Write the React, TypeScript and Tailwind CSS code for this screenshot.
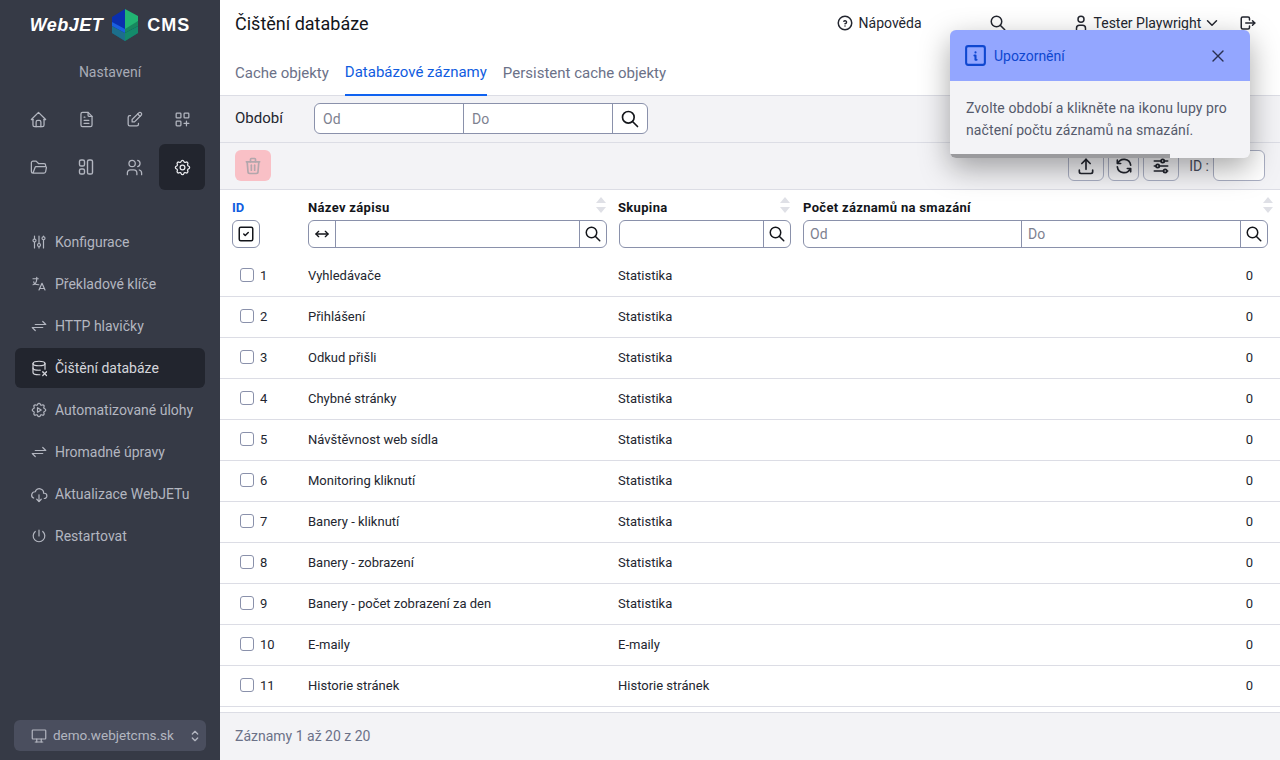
import type { ReactNode } from "react";
import {
    TbAdjustments,
    TbAdjustmentsHorizontal,
    TbArrowsExchange,
    TbArrowsHorizontal,
    TbChevronDown,
    TbCloudDownload,
    TbDatabaseX,
    TbDeviceDesktop,
    TbEdit,
    TbFileText,
    TbFolderOpen,
    TbHelpCircle,
    TbHome,
    TbInfoSquare,
    TbLanguage,
    TbLayoutGridAdd,
    TbLogout,
    TbPower,
    TbRefresh,
    TbSearch,
    TbSelector,
    TbSettings,
    TbSettingsAutomation,
    TbSquareCheck,
    TbTrash,
    TbUpload,
    TbUser,
    TbUsers,
    TbX,
} from "react-icons/tb";

const menuItems = [
    { label: "Konfigurace", icon: TbAdjustments },
    { label: "Překladové klíče", icon: TbLanguage },
    { label: "HTTP hlavičky", icon: TbArrowsExchange },
    { label: "Čištění databáze", icon: TbDatabaseX, active: true },
    { label: "Automatizované úlohy", icon: TbSettingsAutomation },
    { label: "Hromadné úpravy", icon: TbArrowsExchange },
    { label: "Aktualizace WebJETu", icon: TbCloudDownload },
    { label: "Restartovat", icon: TbPower },
];

const rows = [
    ["1", "Vyhledávače", "Statistika"],
    ["2", "Přihlášení", "Statistika"],
    ["3", "Odkud přišli", "Statistika"],
    ["4", "Chybné stránky", "Statistika"],
    ["5", "Návštěvnost web sídla", "Statistika"],
    ["6", "Monitoring kliknutí", "Statistika"],
    ["7", "Banery - kliknutí", "Statistika"],
    ["8", "Banery - zobrazení", "Statistika"],
    ["9", "Banery - počet zobrazení za den", "Statistika"],
    ["10", "E-maily", "E-maily"],
    ["11", "Historie stránek", "Historie stránek"],
];

function ColumnsIcon() {
    return (
        <svg viewBox="0 0 20 20" className="size-5" fill="none" stroke="currentColor" strokeWidth="1.4">
            <rect x="3.5" y="3" width="5" height="6" rx="1.6" />
            <rect x="3.5" y="12" width="5" height="5" rx="1.6" />
            <rect x="11.5" y="3" width="5" height="14" rx="1.6" />
        </svg>
    );
}

function LogoMark() {
    return (
        <svg viewBox="0 0 28 32" className="h-8 w-7">
            <polygon points="14,19 27,13 27,24 14,32 1,24 1,15" fill="#0f6b74" />
            <polygon points="14,22 1,15 1,24 14,32" fill="#1d6f8c" />
            <polygon points="14,22 27,15 27,24 14,32" fill="#148a6a" />
            <polygon points="14,10 27,8 27,17 14,24 1,17 1,9" fill="#0b3f5c" />
            <polygon points="1,8 14,14 14,24 1,17" fill="#1a5fe0" />
            <polygon points="14,14 27,12 27,17 14,24" fill="#17885f" />
            <polygon points="14,0 1,8 1,13 14,20" fill="#0a2fae" />
            <polygon points="14,0 27,7 27,12 14,20" fill="#22b573" />
        </svg>
    );
}

function SortArrows() {
    return (
        <span className="flex flex-col gap-1">
            <span className="h-0 w-0 border-x-[5px] border-b-[6px] border-x-transparent border-b-[#dfe0e6]" />
            <span className="h-0 w-0 border-x-[5px] border-t-[6px] border-x-transparent border-t-[#dfe0e6]" />
        </span>
    );
}

function ToolButton({ children, width }: { children: ReactNode; width: string }) {
    return (
        <button type="button" className={`flex h-[31px] items-center justify-center rounded-md border border-[#a9aec2] text-[#23262f] ${width}`}>
            {children}
        </button>
    );
}

function HeaderCell({ label, overhang }: { label: string; overhang?: boolean }) {
    return (
        <div className={overhang ? "-mr-[5px] flex h-[30px] items-start justify-between pt-[10px]" : "mr-px flex h-[30px] items-start justify-between pt-[10px]"}>
            <span className="text-[13px] leading-4 font-bold tracking-[0.33px] text-[#13151a]">{label}</span>
            <span className="-mt-[3px]">
                <SortArrows />
            </span>
        </div>
    );
}

function FilterSearch() {
    return (
        <span className="flex w-[27px] shrink-0 items-center justify-center border-l border-[#8a91ab] text-[#13151a]">
            <TbSearch className="size-[18px]" />
        </span>
    );
}

export default function App() {
    return (
        <div className="flex h-[760px] w-[1280px] overflow-hidden bg-white font-['Roboto',sans-serif] text-[13px] text-[#23262f]">
            <aside className="flex w-[220px] shrink-0 flex-col bg-[#363a46] text-[#b3b6c0]">
                <div className="flex h-12 items-center justify-center gap-2 pt-0.5">
                    <span className="font-['Liberation_Sans',sans-serif] text-[18px] leading-none font-bold tracking-[0.5px] text-white italic">WebJET</span>
                    <LogoMark />
                    <span className="font-['Liberation_Sans',sans-serif] text-[18px] leading-none font-bold tracking-[1px] text-white">CMS</span>
                </div>
                <div className="mt-3 text-center text-sm leading-6 text-[#a8abb6]">Nastavení</div>
                <div className="mt-3 grid grid-cols-[repeat(4,46px)] gap-0.5 pl-[15px]">
                    <span className="flex h-[46px] items-center justify-center"><TbHome className="size-[19px]" strokeWidth={1.6} /></span>
                    <span className="flex h-[46px] items-center justify-center"><TbFileText className="size-[19px]" strokeWidth={1.6} /></span>
                    <span className="flex h-[46px] items-center justify-center"><TbEdit className="size-[19px]" strokeWidth={1.6} /></span>
                    <span className="flex h-[46px] items-center justify-center"><TbLayoutGridAdd className="size-[19px]" strokeWidth={1.6} /></span>
                    <span className="flex h-[46px] items-center justify-center"><TbFolderOpen className="size-[19px]" strokeWidth={1.6} /></span>
                    <span className="flex h-[46px] items-center justify-center"><ColumnsIcon /></span>
                    <span className="flex h-[46px] items-center justify-center"><TbUsers className="size-[19px]" strokeWidth={1.6} /></span>
                    <span className="flex h-[46px] items-center justify-center rounded-md bg-[#22252e] text-[#e8e9ed]"><TbSettings className="size-[19px]" strokeWidth={1.6} /></span>
                </div>
                <nav className="mt-8 flex flex-col gap-0.5 px-[15px]">
                    {menuItems.map((item) => {
                        const Icon = item.icon;
                        return (
                            <div
                                key={item.label}
                                className={
                                    item.active
                                        ? "flex h-10 items-center gap-[7px] rounded-md bg-[#22252e] pl-[15px] text-sm text-[#d5d6dc]"
                                        : "flex h-10 items-center gap-[7px] pl-[15px] text-sm"
                                }
                            >
                                <Icon className="size-[18px] shrink-0" strokeWidth={1.6} />
                                {item.label}
                            </div>
                        );
                    })}
                </nav>
                <div className="mt-auto mb-[9px] ml-[14px] flex h-[31px] w-[192px] items-center rounded-md bg-[#4a4e5e] pr-[3px] pl-4 text-[13.5px] text-[#b3b6c0]">
                    <TbDeviceDesktop className="size-[18px]" strokeWidth={1.6} />
                    <span className="ml-[5px]">demo.webjetcms.sk</span>
                    <TbSelector className="ml-auto size-4" />
                </div>
            </aside>

            <main className="relative flex min-w-0 flex-1 flex-col">
                <header className="h-[96px] shrink-0 border-b border-[#dcdde5]">
                    <div className="flex h-12 items-center pl-[15px]">
                        <h1 className="text-lg leading-none text-[#13151a]">Čištění databáze</h1>
                        <div className="mb-0.5 ml-[467px] flex items-center gap-[5px] text-sm text-[#23262f]">
                            <TbHelpCircle className="size-[18px]" />
                            Nápověda
                        </div>
                        <TbSearch className="mb-0.5 ml-[67px] size-[18px] text-[#23262f]" />
                        <div className="mb-0.5 ml-[65px] flex items-center text-sm text-[#23262f]">
                            <TbUser className="mr-1 size-[18px]" />
                            <span>Tester Playwright</span>
                            <TbChevronDown className="ml-0.5 size-[18px]" />
                        </div>
                        <TbLogout className="mb-0.5 ml-[18px] size-[18px] text-[#23262f]" />
                    </div>
                    <div className="flex h-[48px] items-end pl-[15px] text-[15px] text-[#6b7188]">
                        <span className="flex h-[46px] items-center pr-4">Cache objekty</span>
                        <span className="flex h-[46px] items-center border-b-2 border-[#0f62f0] text-[#0f5ce0]">Databázové záznamy</span>
                        <span className="flex h-[46px] items-center pl-4">Persistent cache objekty</span>
                    </div>
                </header>

                <div className="flex h-[47px] shrink-0 items-start border-b border-[#dcdde5] bg-[#f3f3f6] pt-[7px] pl-[15px]">
                    <span className="w-[79px] text-[15px] leading-[31px] text-[#23262f]">Období</span>
                    <div className="flex h-[31px] w-[334px] rounded-md border border-[#8a91ab] bg-white text-sm text-[#7d8190]">
                        <span className="flex w-[149px] items-center border-r border-[#8a91ab] pl-2">Od</span>
                        <span className="flex w-[149px] items-center border-r border-[#8a91ab] pl-2">Do</span>
                        <span className="flex flex-1 items-center justify-center text-[#13151a]"><TbSearch className="size-5" /></span>
                    </div>
                </div>

                <div className="flex h-[47px] shrink-0 items-start border-b border-[#dcdde5] bg-[#f3f3f6] px-[15px] pt-[7px]">
                    <button type="button" className="flex h-[31px] w-9 items-center justify-center rounded-md bg-[#f9c0c6] text-[#b3a6ac]">
                        <TbTrash className="size-5" />
                    </button>
                    <div className="ml-auto flex items-center gap-1">
                        <ToolButton width="w-9"><TbUpload className="size-5" /></ToolButton>
                        <ToolButton width="w-[31px]"><TbRefresh className="size-5" /></ToolButton>
                        <ToolButton width="w-9"><TbAdjustmentsHorizontal className="size-5" /></ToolButton>
                        <span className="ml-[6px] text-sm text-[#4a4e5e]">ID :</span>
                        <span className="h-[31px] w-[52px] rounded-md border border-[#a9aec2] bg-white" />
                    </div>
                </div>

                <div className="min-h-0 flex-1 overflow-hidden">
                    <div className="grid h-[66px] grid-cols-[88px_310px_185px_1fr]">
                        <div className="pl-3">
                            <div className="h-[30px] pt-[10px] text-[13px] leading-4 font-bold text-[#0f5ce0]">ID</div>
                            <span className="flex size-7 items-center justify-center rounded-md border border-[#8a91ab] text-[#13151a]">
                                <TbSquareCheck className="size-[18px]" />
                            </span>
                        </div>
                        <div className="pr-[11px]">
                            <HeaderCell label="Název zápisu" />
                            <div className="flex h-7 rounded-md border border-[#8a91ab]">
                                <span className="flex w-[27px] shrink-0 items-center justify-center border-r border-[#8a91ab] text-[#13151a]">
                                    <TbArrowsHorizontal className="size-4" />
                                </span>
                                <span className="flex-1" />
                                <FilterSearch />
                            </div>
                        </div>
                        <div className="pr-3">
                            <HeaderCell label="Skupina" />
                            <div className="ml-px flex h-7 rounded-md border border-[#8a91ab]">
                                <span className="flex-1" />
                                <FilterSearch />
                            </div>
                        </div>
                        <div className="pr-3">
                            <HeaderCell label="Počet záznamů na smazání" overhang />
                            <div className="flex h-7 rounded-md border border-[#8a91ab] text-sm text-[#7d8190]">
                                <span className="flex w-[218px] items-center border-r border-[#8a91ab] pl-1.5">Od</span>
                                <span className="flex flex-1 items-center pl-1.5">Do</span>
                                <FilterSearch />
                            </div>
                        </div>
                    </div>
                    {rows.map(([id, name, group]) => (
                        <div key={id} className="grid h-[41px] grid-cols-[88px_310px_185px_1fr] items-center border-b border-[#dcdde5]">
                            <div className="flex items-center gap-[6px] pl-5">
                                <span className="mb-0.5 size-[14px] rounded-[3px] border-[1.5px] border-[#8a91ab] bg-white" />
                                {id}
                            </div>
                            <div>{name}</div>
                            <div>{group}</div>
                            <div className="pr-[27px] text-right">0</div>
                        </div>
                    ))}
                </div>

                <footer className="flex h-[48px] shrink-0 items-center border-t border-[#dcdde5] bg-[#f3f3f6] pb-0.5 pl-[15px] text-sm text-[#6b7188]">
                    Záznamy 1 až 20 z 20
                </footer>

                {/* toast over the top right corner */}
                <div className="absolute top-[30px] right-[30px] w-[300px] overflow-hidden rounded-md bg-[#f3f3f6] shadow-[0_10px_30px_rgba(0,0,0,0.35)]">
                    <div className="flex h-[51px] items-center bg-[#93a6ff] pr-[22px] pl-[13px] text-sm text-[#0f47d0]">
                        <TbInfoSquare className="size-[25px]" />
                        <span className="ml-[6px]">Upozornění</span>
                        <TbX className="ml-auto size-5 text-[#2a3050]" strokeWidth={1.6} />
                    </div>
                    <div className="px-4 pt-4 pb-[13px] text-sm leading-[22px] tracking-[0.1px] text-[#555a6c]">
                        Zvolte období a klikněte na ikonu lupy pro načtení počtu záznamů na smazání.
                    </div>
                    <div className="h-1 w-[220px] bg-[#9a9a9d]" />
                </div>
            </main>
        </div>
    );
}
